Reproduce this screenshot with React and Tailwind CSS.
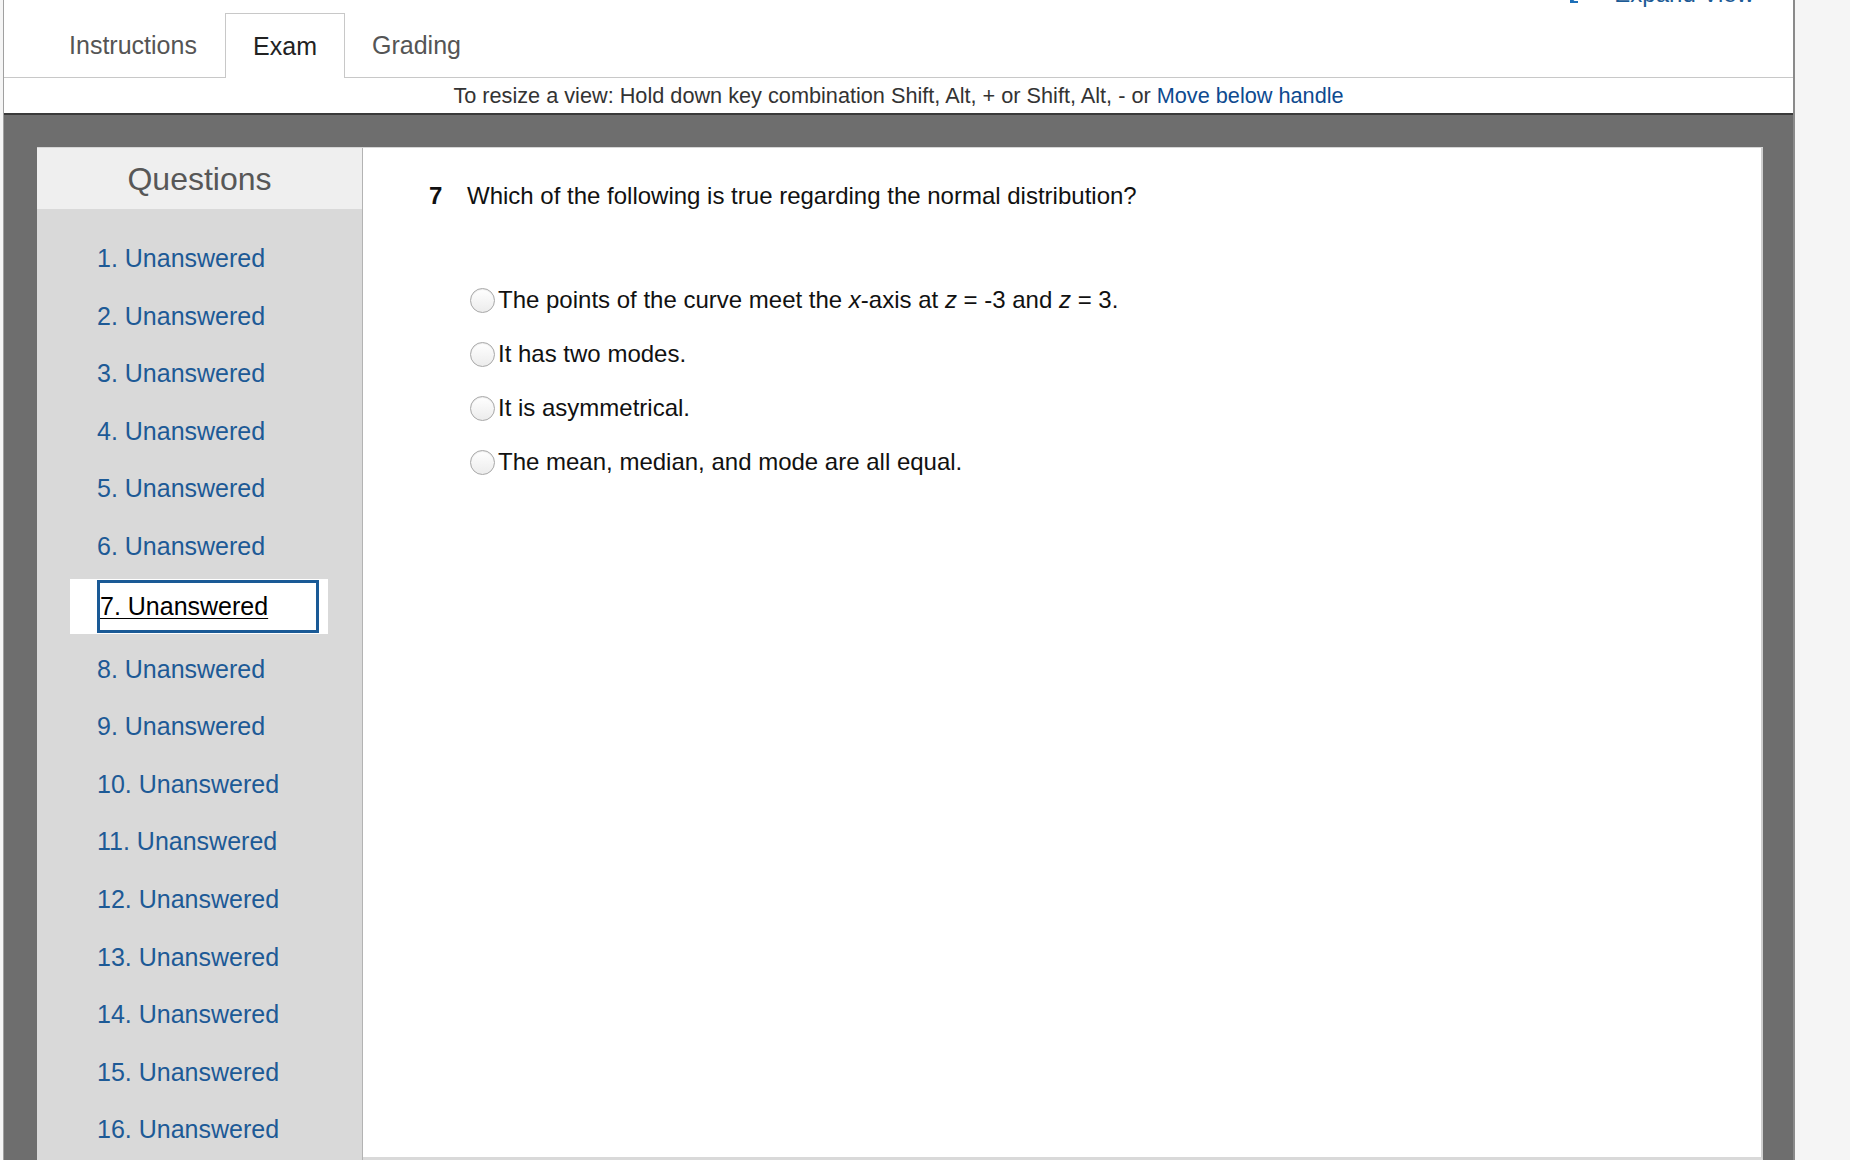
import React from "react";

const items = Array.from({ length: 16 }, (_, i) => i + 1);

function Radio() {
  return (
    <span className="mr-[3px] inline-block h-[25px] w-[25px] shrink-0 rounded-full border border-[#a8a8a8] bg-gradient-to-b from-white to-[#ececec] shadow-[inset_0_1px_1px_rgba(0,0,0,0.08)]" />
  );
}

export default function App() {
  return (
    <div className="h-[1160px] w-[1850px] overflow-hidden bg-[#f5f5f5] font-['Liberation_Sans',Arial,sans-serif]">
      <div className="ml-[3px] flex h-full w-[1792px] flex-col border-l border-r-2 border-l-[#a0a0a0] border-r-[#8a8a8a] bg-white">
        {/* Tab bar */}
        <div className="flex h-[78px] shrink-0 items-end justify-between border-b border-[#c8c8c8]">
          <div className="flex items-end pl-[37px]">
            <div className="flex h-[64px] w-[184px] items-center justify-center pt-[2px] text-[25px] text-[#555]">
              Instructions
            </div>
            <div className="-mb-px flex h-[65px] w-[120px] items-center justify-center border border-b-0 border-[#c8c8c8] bg-white pt-[1px] text-[25px] text-[#222]">
              Exam
            </div>
            <div className="flex h-[64px] w-[143px] items-center justify-center pt-[2px] text-[25px] text-[#555]">
              Grading
            </div>
          </div>
          <div className="mb-auto -mt-[20px] flex items-end pr-[39px]">
            <svg width="16" height="16" viewBox="0 0 16 16" className="mb-[3px] mr-[30px] text-[#1d6fb8]">
              <path d="M13 3 L4 12" stroke="currentColor" strokeWidth="2" fill="none" />
              <path d="M3 6 L3 13 L10 13" stroke="currentColor" strokeWidth="2" fill="none" />
            </svg>
            <span className="text-[24px] leading-[28px] text-[#1d5b96]">Expand View</span>
          </div>
        </div>

        {/* Resize bar */}
        <div className="flex h-[37px] shrink-0 items-center justify-center border-b-2 border-[#3a3a3a] pt-[1px] text-[21.7px] text-[#333]">
          <span>
            To resize a view: Hold down key combination Shift, Alt, + or Shift, Alt, - or{" "}
            <span className="text-[#0d4a8f]">Move below handle</span>
          </span>
        </div>

        {/* Dark area */}
        <div className="flex min-h-0 flex-1 flex-col bg-[#6e6e6e] pl-[33px] pr-[30px] pt-[32px]">
          <div className="flex min-h-0 flex-1 border-t border-[#d6d6d6]">
            {/* Sidebar */}
            <div className="flex w-[326px] shrink-0 flex-col border-r border-[#b3b3b3] bg-[#d9d9d9]">
              <div className="flex h-[61px] shrink-0 items-center justify-center bg-[#efefef] text-[32px] text-[#575757]">
                Questions
              </div>
              <div className="flex flex-col pt-[21px]">
                {items.map((n) =>
                  n === 7 ? (
                    <div key={n} className="flex h-[65px] shrink-0 flex-col pt-[3px]">
                      <div className="ml-[33px] flex h-[55px] w-[258px] items-start bg-white pl-[27px] pt-[1px]">
                        <div className="flex h-[53px] w-[222px] items-center border-[3px] border-[#1a5a96] pt-[2px] text-[25px] text-black">
                          <span className="underline decoration-1 underline-offset-[3px]">7. Unanswered</span>
                        </div>
                      </div>
                    </div>
                  ) : (
                    <div
                      key={n}
                      className="flex h-[57.6px] shrink-0 items-center pl-[60px] text-[25px] text-[#1d5a96]"
                    >
                      {n}. Unanswered
                    </div>
                  )
                )}
              </div>
            </div>

            {/* Main */}
            <div className="flex-1 border-b-[3px] border-r-[2px] border-b-[#d9d9d9] border-r-[#cfcfcf] bg-white pl-[66px] pt-[34px]">
              <div className="flex h-[28px] items-center text-[24px] text-[#111]">
                <span className="w-[38px] font-bold">7</span>
                <span>Which of the following is true regarding the normal distribution?</span>
              </div>
              <div className="ml-[41px] mt-[63px] flex flex-col text-[24px] text-[#111]">
                <div className="flex h-[54px] items-center">
                  <Radio />
                  <span>
                    The points of the curve meet the <i>x</i>-axis at <i>z</i> = -3 and <i>z</i> = 3.
                  </span>
                </div>
                <div className="flex h-[54px] items-center">
                  <Radio />
                  <span>It has two modes.</span>
                </div>
                <div className="flex h-[54px] items-center">
                  <Radio />
                  <span>It is asymmetrical.</span>
                </div>
                <div className="flex h-[54px] items-center">
                  <Radio />
                  <span>The mean, median, and mode are all equal.</span>
                </div>
              </div>
            </div>
          </div>
        </div>
      </div>
    </div>
  );
}
